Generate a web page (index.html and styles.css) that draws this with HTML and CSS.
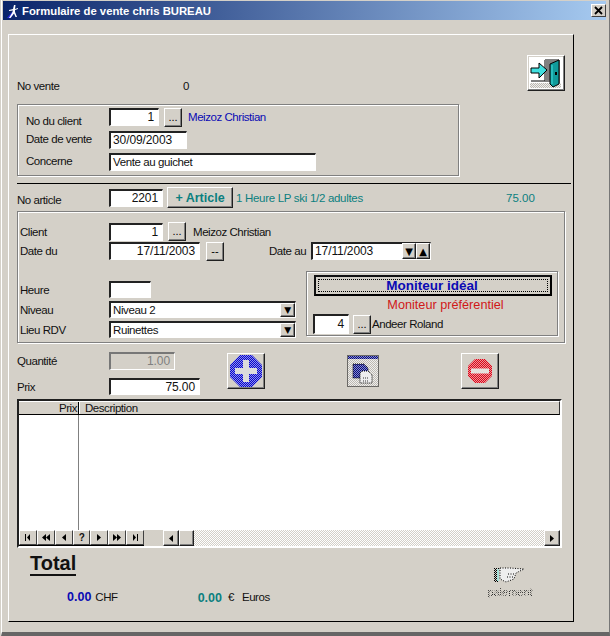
FILE: index.html
```html
<!DOCTYPE html>
<html lang="fr">
<head>
<meta charset="utf-8">
<title>Formulaire de vente chris BUREAU</title>
<link rel="stylesheet" href="styles.css">
</head>
<body>
<svg class="defs" width="0" height="0">
  <defs>
    <pattern id="dB" width="2" height="2" patternUnits="userSpaceOnUse"><rect width="2" height="2" fill="#8c8cf0"/><rect width="1" height="1" fill="#0808c8"/><rect x="1" y="1" width="1" height="1" fill="#0808c8"/></pattern>
    <pattern id="dR" width="2" height="2" patternUnits="userSpaceOnUse"><rect width="2" height="2" fill="#f09098"/><rect width="1" height="1" fill="#d80818"/><rect x="1" y="1" width="1" height="1" fill="#d80818"/></pattern>
    <pattern id="dK" width="2" height="2" patternUnits="userSpaceOnUse"><rect width="1" height="1" fill="#000"/><rect x="1" y="1" width="1" height="1" fill="#000"/></pattern>
    <pattern id="dT" width="2" height="2" patternUnits="userSpaceOnUse"><rect width="2" height="2" fill="#eee"/><rect width="1" height="1" fill="#bdb9b1"/><rect x="1" y="1" width="1" height="1" fill="#bdb9b1"/></pattern>
    <pattern id="dN" width="2" height="2" patternUnits="userSpaceOnUse"><rect width="2" height="2" fill="#8088d8"/><rect width="1" height="1" fill="#101070"/><rect x="1" y="1" width="1" height="1" fill="#101070"/></pattern>
  </defs>
</svg>
<div class="window">
  <header class="titlebar">
    <svg class="appicon" width="13" height="14" viewBox="0 0 13 14"><path d="M0 14 5 8l2 1-3 5z" fill="#2a2ae0"/><path d="M7 1 6 5 2 6v1l4-.5L5 9 2 14h1.500L7 9.500 8.500 13H10L8 8V6l3-1V4L8 5l.5-4z" fill="#fff"/></svg>
    <span class="title">Formulaire de vente chris BUREAU</span>
    <span class="close"><svg width="9" height="9" viewBox="0 0 9 9"><path d="M1 1 8 8M8 1 1 8" stroke="#000" stroke-width="1.800"/></svg></span>
  </header>

  <main class="panel">
    <div class="head">
      <span class="lab lab-main no-vente">No vente</span>
      <span class="vente-num">0</span>
      <button class="raised exit" aria-label="Quitter">
        <svg width="34" height="32" viewBox="0 0 34 32">
          <rect x="0" y="0" width="34" height="32" fill="#fff"/>
          <rect x="1" y="26" width="31" height="5" fill="url(#dT)"/>
          <path d="M2 24H16V3H30V26" fill="none" stroke="#000"/>
          <rect x="16" y="3" width="14" height="22" fill="#808080"/>
          <path d="M21 27V7L30 3V27l-6 3z" fill="#109a9a" stroke="#000"/>
          <path d="M23 8v19" stroke="#40e0e0"/>
          <rect x="26" y="15" width="2" height="3" fill="#000"/>
          <path d="M2 11H10V6L18 13 10 21V16H2z" fill="#40e0e0" stroke="#000"/>
        </svg>
      </button>
    </div>

    <section class="group group-client">
      <div class="row r-c1"><span class="lab l83 low3">No du client</span><span class="inp w50 right">1</span><button class="raised dots m5">...</button><span class="txt blue ml6">Meizoz Christian</span></div>
      <div class="row r-c2"><span class="lab l83">Date de vente</span><span class="inp w78">30/09/2003</span></div>
      <div class="row r-c3"><span class="lab l83">Concerne</span><span class="inp w207 tight">Vente au guichet</span></div>
    </section>

    <hr class="sep">

    <div class="row r-art">
      <span class="lab l92 low2">No article</span><span class="inp w54 right">2201</span>
      <button class="raised add-art">+ Article</button>
      <span class="txt teal art-name">1 Heure LP ski 1/2 adultes</span>
      <span class="txt teal art-price">75.00</span>
    </div>

    <section class="group group-art">
      <div class="row r-a1"><span class="lab l89">Client</span><span class="inp w54 right">1</span><button class="raised dots m5">...</button><span class="txt ml7">Meizoz Christian</span></div>
      <div class="row r-a2"><span class="lab l89">Date du</span><span class="inp w91 right">17/11/2003</span><button class="raised dots m6">--</button><span class="lab date-au">Date au</span>
        <span class="inp w120 spin">17/11/2003<span class="spins"><span class="raised sb">▼</span><span class="raised sb">▲</span></span></span>
      </div>
      <div class="lower">
        <div class="lower-left">
          <div class="row r-h"><span class="lab l89">Heure</span><span class="inp w42"></span></div>
          <div class="row r-n"><span class="lab l89">Niveau</span><span class="inp w187 combo tight">Niveau 2<span class="raised cb">▼</span></span></div>
          <div class="row r-n"><span class="lab l89">Lieu RDV</span><span class="inp w187 combo tight">Ruinettes<span class="raised cb">▼</span></span></div>
        </div>
        <div class="group sub">
          <button class="moniteur"><span class="focus">Moniteur idéal</span></button>
          <div class="pref">Moniteur préférentiel</div>
          <div class="row r-m"><span class="inp w36 right">4</span><button class="raised dots m4">...</button><span class="txt ml1">Andeer Roland</span></div>
        </div>
      </div>
    </section>

    <div class="qty">
      <div class="qty-left">
        <div class="row r-q"><span class="lab l92">Quantité</span><span class="inp w66 right disabled">1.00</span></div>
        <div class="row r-p"><span class="lab l92">Prix</span><span class="inp w91 right">75.00</span></div>
      </div>
      <button class="raised act" aria-label="Ajouter">
        <svg width="32" height="32" viewBox="0 0 32 32"><path d="M10 0H22L32 10V22L22 32H10L0 22V10z" fill="url(#dB)"/><path d="M13 5h6v8h8v6h-8v8h-6v-8H5v-6h8z" fill="#dcdcdc"/></svg>
      </button>
      <span class="copy" aria-label="Copier">
        <svg width="32" height="32" viewBox="0 0 32 32"><rect x=".5" y=".5" width="31" height="31" fill="url(#dT)" stroke="#000" stroke-dasharray="1 1"/><rect x="1" y="1" width="30" height="3" fill="url(#dN)"/><path d="M6 9h11l4 4v10H6z" fill="url(#dN)" stroke="#000" stroke-dasharray="1 1"/><path d="M15 16h6l4 4v8H13V18z" fill="#eee" stroke="#000" stroke-dasharray="1 1"/><path d="M16 23h6M16 26h6" stroke="#333" stroke-dasharray="1 1"/></svg>
      </span>
      <button class="raised act" aria-label="Supprimer">
        <svg width="24" height="24" viewBox="0 0 24 24"><path d="M7 0H17L24 7V17L17 24H7L0 17V7z" fill="url(#dR)"/><rect x="3" y="9.500" width="18" height="5" fill="#e6e0dc"/></svg>
      </button>
    </div>

    <section class="table">
      <div class="thead"><span class="th th-prix">Prix</span><span class="th th-desc">Description</span></div>
      <div class="tbody"><div class="col-prix"></div></div>
      <div class="tnav">
        <div class="navs">
          <span class="nb"><svg width="7" height="7" viewBox="0 0 7 7"><path d="M1 0h1v7H1zM6 0v7L3 3.500z"/></svg></span>
          <span class="nb"><svg width="8" height="7" viewBox="0 0 8 7"><path d="M4 0v7L0 3.500zM8 0v7L4 3.500z"/></svg></span>
          <span class="nb"><svg width="4" height="7" viewBox="0 0 4 7"><path d="M4 0v7L0 3.500z"/></svg></span>
          <span class="nb q">?</span>
          <span class="nb"><svg width="4" height="7" viewBox="0 0 4 7"><path d="M0 0v7l4-3.500z"/></svg></span>
          <span class="nb"><svg width="8" height="7" viewBox="0 0 8 7"><path d="M0 0v7l4-3.500zM4 0v7l4-3.500z"/></svg></span>
          <span class="nb"><svg width="7" height="7" viewBox="0 0 7 7"><path d="M1 0v7l3-3.500zM5 0h1v7H5z"/></svg></span>
        </div>
        <div class="hscroll">
          <span class="raised sbtn"><svg width="4" height="7" viewBox="0 0 4 7"><path d="M4 0v7L0 3.500z"/></svg></span>
          <span class="raised thumb"></span>
          <span class="track"></span>
          <span class="raised sbtn"><svg width="4" height="7" viewBox="0 0 4 7"><path d="M0 0v7l4-3.500z"/></svg></span>
        </div>
      </div>
    </section>

    <footer class="foot">
      <div class="totals">
        <div class="total">Total</div>
        <div class="amounts">
          <span class="amt blue">0.00</span><span class="cur">CHF</span>
          <span class="amt teal amt-eu">0.00</span><span class="cur eur">€</span><span class="cur euros">Euros</span>
        </div>
      </div>
      <div class="pay">
        <svg class="hand" width="32" height="20" viewBox="0 0 32 20"><rect x="0" y="2" width="5" height="14" fill="url(#dK)"/><rect x="3" y="3" width="2" height="12" fill="#a8e0d8"/><path d="M6 2h10l14 1-8 4-2 6-8 3-6-3z" fill="#eee"/><path d="M6 2h10l14 1-8 4-2 6-8 3-6-3z" fill="none" stroke="#000" stroke-dasharray="1 1.500"/><path d="M14 8h6M13 11h6" stroke="#000" stroke-dasharray="1 1.500"/></svg>
        <span class="pay-txt">paiement</span>
      </div>
    </footer>
  </main>
</div>
</body>
</html>
```
FILE: styles.css
```css
* { box-sizing: border-box; }
html, body { margin: 0; padding: 0; }
body {
  width: 610px;
  height: 636px;
  overflow: hidden;
  background: #d4d0c8;
  font: 11.500px "Liberation Sans", Arial, sans-serif;
  letter-spacing: -0.45px;
  color: #111;
}
.defs { position: absolute; }
.window {
  height: 636px;
  padding: 1px 2px 4px 2px;
  border-left: 1px solid #fff;
  border-bottom: 4px solid #666;
  border-right: 1px solid #777;
  margin-left: 1px;
}
.titlebar {
  height: 19px;
  margin-left: -1px;
  margin-right: 1px;
  background: linear-gradient(90deg, #0a246a, #a6caf0);
  display: flex;
  align-items: center;
  padding-left: 4px;
}
.appicon { flex: none; }
.title { color: #fff; font: bold 11.300px "Liberation Sans", Arial, sans-serif; letter-spacing: 0; margin-left: 2px; }
.close {
  margin-left: auto;
  width: 15px;
  height: 13px;
  background: #d4d0c8;
  border: 1px solid;
  border-color: #fff #404040 #404040 #fff;
  display: flex;
  align-items: center;
  justify-content: center;
}
.panel {
  margin: 14px 0 0 4px;
  width: 566px;
  height: 588px;
  border: 1px solid;
  border-color: #fff #000 #000 #fff;
  padding: 20px 0 0 8px;
}
.head { display: flex; height: 49px; }
.no-vente { margin-top: 25px; width: 166px; height: 14px; }
.vente-num { margin-top: 25px; height: 14px; }
.exit {
  width: 38px;
  height: 36px;
  margin-left: auto;
  margin-right: 8px;
}
.raised {
  background: #d4d0c8;
  border: 1px solid;
  border-color: #fff #202020 #202020 #fff;
  box-shadow: inset -1px -1px 0 #808080;
  padding: 0;
  font: inherit;
  display: inline-flex;
  align-items: center;
  justify-content: center;
}
.group {
  border: 1px solid #808080;
  box-shadow: 1px 1px 0 #fff, inset 1px 1px 0 #fff;
}
.group-client { width: 442px; height: 72px; padding: 3px 0 0 8px; }
.row { display: flex; align-items: center; }
.lab { flex: none; white-space: nowrap; }
.low3 { padding-top: 8px; }
.low2 { padding-top: 4px; }
.l83 { width: 83px; }
.l89 { width: 89px; }
.l92 { width: 92px; }
.r-c1 { height: 18px; }
.r-c2 { height: 18px; margin-top: 5px; }
.r-c3 { height: 18px; margin-top: 4px; }
.r-c2 .lab, .r-c3 .lab { padding-bottom: 2px; }
.inp {
  flex: none;
  display: block;
  background: #fff;
  border: 1px solid;
  border-width: 2px 1px 1px 2px;
  border-color: #222 #fff #fff #222;
  height: 18px;
  line-height: 15px;
  padding: 0 2px 0 2px;
  white-space: nowrap;
  position: relative;
  font-size: 12px;
  letter-spacing: -0.1px;
}
.inp.tight { font-size: 11.500px; letter-spacing: -0.4px; }
.right { text-align: right; padding-right: 4px; }
.disabled { background: #d4d0c8; color: #808080; border-color: #777 #fff #fff #777; }
.w36 { width: 36px; height: 20px; line-height: 17px; }
.w42 { width: 42px; }
.w50 { width: 50px; }
.w54 { width: 54px; }
.w66 { width: 66px; }
.w78 { width: 78px; }
.w91 { width: 91px; }
.w120 { width: 120px; }
.w187 { width: 187px; }
.w207 { width: 207px; }
.dots { width: 18px; height: 19px; flex: none; font-size: 11px; line-height: 1; }
.m4 { margin-left: 4px; }
.m5 { margin-left: 5px; }
.m6 { margin-left: 6px; }
.ml1 { margin-left: 1px; }
.ml6 { margin-left: 6px; }
.ml7 { margin-left: 7px; }
.txt { white-space: nowrap; }
.blue { color: #0a0ab4; }
.teal { color: #0b7f7f; }
.sep {
  width: 554px;
  height: 1px;
  margin: 7px 0 0;
  border: 0;
  background: #000;
}
.r-art { height: 21px; margin-top: 3px; }
.add-art {
  width: 66px;
  height: 21px;
  margin-left: 4px;
  color: #0b7f7f;
  font: bold 12.500px "Liberation Sans", Arial, sans-serif;
  letter-spacing: 0;
}
.art-name { margin-left: 3px; width: 270px; letter-spacing: -0.3px; }
.art-price { letter-spacing: 0; }
.group-art { width: 548px; height: 132px; margin-top: 3px; padding: 10px 0 0 2px; }
.r-a1 { height: 19px; }
.r-a2 { height: 20px; }
.date-au { margin-left: 45px; width: 42px; }
.spins { position: absolute; right: 0; top: -1px; display: flex; }
.sb { width: 14px; height: 16px; font: 10px "DejaVu Sans", sans-serif; color: #000; }
.lower { display: flex; margin-top: 10px; }
.lower-left { width: 286px; padding-top: 10px; }
.r-h { height: 17px; }
.r-h .inp, .r-n .inp { height: 17px; }
.r-n { height: 17px; margin-top: 3px; }
.combo { line-height: 14px; }
.cb { position: absolute; right: 0; top: 0; width: 15px; height: 14px; font: 9px "DejaVu Sans", sans-serif; color: #000; }
.sub { width: 252px; height: 65px; padding: 3px 0 0 7px; }
.moniteur {
  display: block;
  width: 238px;
  height: 21px;
  padding: 2px;
  background: #d4d0c8;
  border: 2px solid #000;
  border-color: #111 #000 #000 #111;
  font: bold 13.500px "Liberation Sans", Arial, sans-serif;
  letter-spacing: 0;
  color: #0a0ab4;
}
.focus { display: block; height: 13px; line-height: 12px; border: 1px dotted #000; margin-top: -1px; padding-right: 2px; }
.pref { height: 18px; color: #d01818; font: 12.700px/18px "Liberation Sans", Arial, sans-serif; letter-spacing: 0; text-align: center; padding-left: 25px; width: 238px; }
.r-m { height: 20px; margin-left: -1px; }
.qty { display: flex; margin-top: 9px; height: 47px; }
.qty-left { width: 210px; }
.r-q { height: 18px; }
.r-p { height: 17px; margin-top: 8px; }
.r-p .inp { height: 17px; line-height: 14px; }
.act { width: 38px; height: 36px; flex: none; margin-top: 1px; }
.copy { margin: 3px 82px 0 82px; width: 32px; height: 32px; flex: none; }
.table {
  width: 545px;
  height: 149px;
  border: 1px solid;
  border-color: #202020 #fff #fff #202020;
  border-width: 2px;
  display: flex;
  flex-direction: column;
  background: #d4d0c8;
}
.thead { display: flex; height: 14px; flex: none; border-bottom: 1px solid #000; border-right: 1px solid #333; border-top: 1px solid #fff; }
.th { display: block; line-height: 12px; }
.th-prix { width: 60px; text-align: right; padding-right: 1px; border-right: 1px solid #000; }
.th-desc { padding-left: 5px; border-left: 1px solid #fff; }
.tbody { flex: 1; background: #fff; display: flex; }
.col-prix { width: 60px; border-right: 1px solid #808080; }
.tnav { height: 16px; flex: none; display: flex; background: #d4d0c8; }
.navs { display: flex; width: 125px; border-bottom: 1px solid #000; height: 16px; }
.nb {
  flex: 1;
  display: flex;
  align-items: center;
  justify-content: center;
  border: 1px solid;
  border-color: #fff #404040 #404040 #fff;
  font: bold 10px "Liberation Sans", Arial, sans-serif;
}
.hscroll { margin-left: 19px; flex: 1; display: flex; height: 16px; }
.sbtn { width: 16px; height: 16px; flex: none; }
.thumb { width: 15px; height: 16px; flex: none; }
.track {
  flex: 1;
  background-color: #fff;
  background-image: repeating-conic-gradient(#d4d0c8 0 25%, #fff 0 50%);
  background-size: 2px 2px;
}
.foot { display: flex; justify-content: space-between; }
.totals { margin-left: 13px; }
.total {
  display: inline-block;
  margin-top: 5px;
  font: bold 20px/21px "Liberation Sans", Arial, sans-serif;
  letter-spacing: 0;
  border-bottom: 2px solid #111;
  color: #111;
}
.amounts { margin: 14px 0 0 37px; display: flex; align-items: center; }
.amt { font: bold 12.500px "Liberation Sans", Arial, sans-serif; letter-spacing: 0; }
.cur { margin-left: 4px; }
.amt-eu { margin-left: 80px; position: relative; top: 1px; }
.eur { margin-left: 6px; }
.euros { margin-left: 8px; }
.pay { margin: 18px 41px 0 0; width: 44px; display: flex; flex-direction: column; align-items: center; }
.pay-txt {
  font: 11px/12px "Liberation Sans", Arial, sans-serif;
  letter-spacing: 0;
  color: #222;
  -webkit-mask-image: repeating-conic-gradient(#000 0 25%, transparent 0 50%);
  -webkit-mask-size: 2px 2px;
  mask-image: repeating-conic-gradient(#000 0 25%, transparent 0 50%);
  mask-size: 2px 2px;
}
```
